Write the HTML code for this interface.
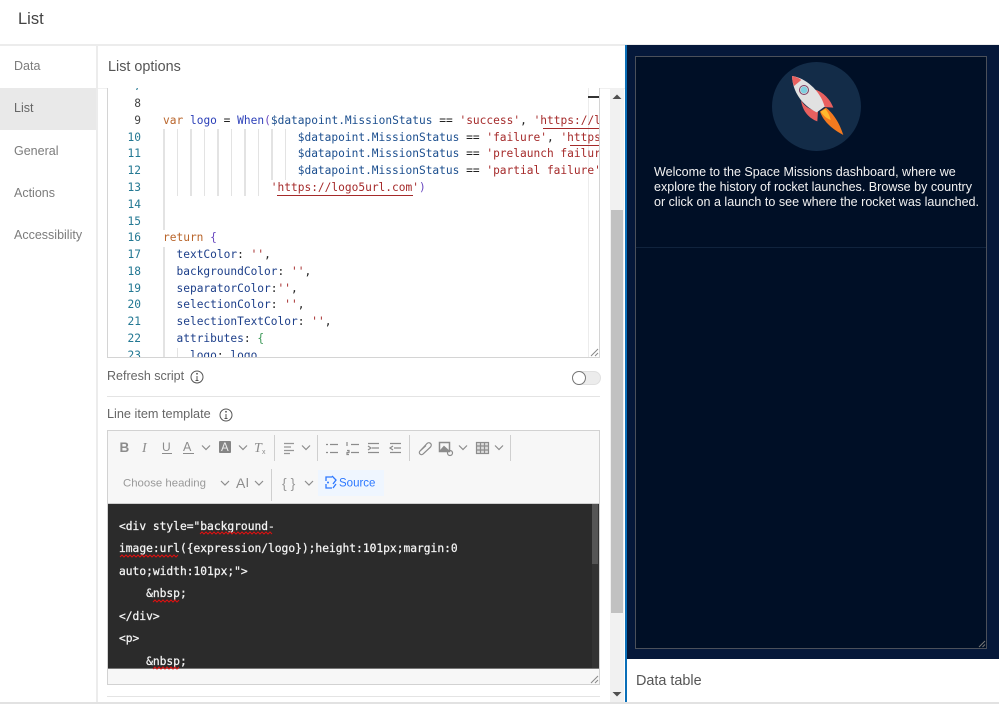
<!DOCTYPE html>
<html><head><meta charset="utf-8"><style>
html,body{margin:0;padding:0;background:#fff;width:999px;height:714px;overflow:hidden}
body{position:relative;font-family:"Liberation Sans",sans-serif}
.a{position:absolute}
.t{position:absolute;white-space:nowrap;line-height:18px}
.nav{color:#7c7c7c;font-size:12.5px;left:14px}
pre{margin:0;font-family:"DejaVu Sans Mono",monospace;font-size:11.2px;position:absolute}
.g{position:absolute;width:1.5px;background:#e3e3e3}
.k{color:#b9652b}.v{color:#2b3fb8}.d{color:#1c4f8f}.s{color:#a52a2a}.p{color:#222}.x{color:#1d3f8a}.b1{color:#6b4bc0}.b2{color:#3f9a5a}
</style></head><body>
<div class="t" style="left:18px;top:10px;font-size:16.5px;color:#444">List</div>
<div class="a" style="left:0;top:44px;width:999px;height:2px;background:#ececec"></div>
<div class="a" style="left:96px;top:46px;width:2px;height:656px;background:#ececec"></div>
<div class="a" style="left:0;top:88px;width:96px;height:42px;background:#e9e9e9"></div>
<div class="t nav" style="top:57px">Data</div>
<div class="t nav" style="top:99px;color:#666">List</div>
<div class="t nav" style="top:142px">General</div>
<div class="t nav" style="top:184px">Actions</div>
<div class="t nav" style="top:226px">Accessibility</div>
<div class="t" style="left:108px;top:58px;font-size:14.4px;color:#555">List options</div>
<div class="a" style="left:98px;top:88px;width:527px;height:1px;background:#f0f0f0"></div>

<div class="a" style="left:610px;top:89px;width:14px;height:613px;background:#f1f1f1"></div>
<div class="a" style="left:611px;top:210px;width:12px;height:403px;background:#c1c1c1"></div>
<div class="a" style="left:107px;top:88px;width:493px;height:270px;border:solid #d4d4d4;border-width:0 1px 1px 1px;box-sizing:border-box;overflow:hidden;background:#fff">
<div class="a" style="left:480px;top:0;width:1px;height:270px;background:#ececec"></div>
<pre style="left:0;top:-8.64px;width:33px;text-align:right;line-height:16.77px;color:#237893">7
<span style="color:#444">8
9</span>
10
11
12
13
14
15
16
17
18
19
20
21
22
23</pre>
<div class="g" style="left:55px;top:41px;height:101px"></div>
<div class="g" style="left:55px;top:159px;height:110px"></div>
<div class="g" style="left:68.5px;top:41px;height:67px"></div>
<div class="g" style="left:82px;top:41px;height:67px"></div>
<div class="g" style="left:95.5px;top:41px;height:67px"></div>
<div class="g" style="left:109px;top:41px;height:67px"></div>
<div class="g" style="left:122.5px;top:41px;height:67px"></div>
<div class="g" style="left:136px;top:41px;height:67px"></div>
<div class="g" style="left:149.5px;top:41px;height:67px"></div>
<div class="g" style="left:163px;top:41px;height:51px"></div>
<div class="g" style="left:176.5px;top:41px;height:51px"></div>
<div class="g" style="left:68.5px;top:260px;height:10px"></div>
<div class="a" style="left:55px;top:0;width:436px;height:270px;overflow:hidden">
<pre style="left:0;top:-8.64px;line-height:16.77px;color:#222">


<span class="k">var</span> <span class="v">logo</span> = <span class="v">When</span><span class="b1">(</span><span class="d">$datapoint.MissionStatus</span> == <span class="s">'success'</span>, <span class="s">'https://logo1url.com'</span>,
                    <span class="d">$datapoint.MissionStatus</span> == <span class="s">'failure'</span>, <span class="s">'https://logo2url.com'</span>,
                    <span class="d">$datapoint.MissionStatus</span> == <span class="s">'prelaunch failure'</span>, <span class="s">'https'</span>,
                    <span class="d">$datapoint.MissionStatus</span> == <span class="s">'partial failure'</span>, <span class="s">'https'</span>,
                <span class="s">'https://logo5url.com'</span><span class="b1">)</span>


<span class="k">return</span> <span class="b1">{</span>
  <span class="x">textColor</span>: <span class="s">''</span>,
  <span class="x">backgroundColor</span>: <span class="s">''</span>,
  <span class="x">separatorColor</span>:<span class="s">''</span>,
  <span class="x">selectionColor</span>: <span class="s">''</span>,
  <span class="x">selectionTextColor</span>: <span class="s">''</span>,
  <span class="x">attributes</span>: <span class="b2">{</span>
    <span class="x">logo</span>: <span class="x">logo</span></pre>
</div>
<div class="a" style="left:480px;top:8px;width:11px;height:2px;background:#333"></div>
<div class="a" style="left:435px;top:40px;width:56px;height:1px;background:#a52a2a"></div>
<div class="a" style="left:462px;top:57px;width:29px;height:1px;background:#a52a2a"></div>
<div class="a" style="left:169px;top:107px;width:136px;height:1px;background:#a52a2a"></div>
</div>

<div class="t" style="left:107px;top:367px;font-size:12.5px;color:#666">Refresh script</div>
<div class="a" style="left:107px;top:396px;width:493px;height:1px;background:#e4e4e4"></div>
<div class="t" style="left:107px;top:405px;font-size:12.7px;color:#666">Line item template</div>
<div class="a" style="left:572px;top:371px;width:29px;height:14px;border-radius:7px;background:#ececec;box-sizing:border-box;border:1px solid #e0e0e0"></div>
<div class="a" style="left:572px;top:371px;width:14px;height:14px;border-radius:50%;background:#fff;box-sizing:border-box;border:1.5px solid #777"></div>

<div class="a" style="left:107px;top:430px;width:493px;height:255px;background:#f7f7f7;border:1px solid #d2d2d2;box-sizing:border-box"></div>
<div class="a" style="left:318px;top:470px;width:66px;height:26px;background:#eff6ff"></div>
<div class="a" style="left:108px;top:503px;width:491px;height:1px;background:#cfcfcf"></div>
<div class="a" style="left:108px;top:504px;width:491px;height:165px;background:#2b2b2b;overflow:hidden;border-bottom:1px solid #777;box-sizing:border-box">
<div class="a" style="left:484px;top:0;width:7px;height:165px;background:#333"></div>
<div class="a" style="left:484px;top:0;width:6px;height:60px;background:#555"></div>
<pre style="left:11px;top:11.500px;line-height:22.6px;color:#f4f4f4;font-size:11.25px;-webkit-text-stroke:.25px #f4f4f4">&lt;div style="background-
image:url({expression/logo});height:101px;margin:0
auto;width:101px;"&gt;
    &amp;nbsp;
&lt;/div&gt;
&lt;p&gt;
    &amp;nbsp;</pre>
</div>
<div class="a" style="left:107px;top:696px;width:493px;height:1px;background:#e4e4e4"></div>

<div class="a" style="left:625px;top:45px;width:374px;height:614px;background:#05183a"></div>
<div class="a" style="left:625px;top:45px;width:2px;height:658px;background:#0a6fb8"></div>
<div class="a" style="left:635px;top:56px;width:352px;height:593px;background:#000f26;border:1px solid #4b505a;box-sizing:border-box"></div>
<div class="a" style="left:636px;top:247px;width:350px;height:1px;background:#10233d"></div>
<div class="a" style="left:772px;top:62px;width:89px;height:89px;border-radius:50%;background:#132c48"></div>
<div class="t" style="left:654px;top:164.500px;font-size:12.55px;line-height:15.3px;color:#f2f2f2">Welcome to the Space Missions dashboard, where we<br>explore the history of rocket launches. Browse by country<br>or click on a launch to see where the rocket was launched.</div>
<div class="t" style="left:636px;top:672px;font-size:14.4px;color:#555">Data table</div>
<div class="a" style="left:0;top:702px;width:999px;height:2px;background:#e2e2e2"></div>

<svg class="a" style="left:0;top:0" width="999" height="714" viewBox="0 0 999 714" fill="none">
<!-- rocket -->
<g transform="translate(760 55) scale(.3333)">
<path d="M163 103C190 110 212 135 220 158L190 156C186 135 175 118 163 103Z" fill="#e8605f"/>
<path d="M123 136C135 155 150 165 174 168L172 199C148 190 128 170 123 136Z" fill="#e8605f"/>
<path d="M96 63C135 68 180 105 194 155L170 172C125 150 98 110 96 63Z" fill="#e1e1e1"/>
<path d="M96 63C108 65 118 70 124 75L102 93C99 85 96 75 96 63Z" fill="#e8605f"/>
<circle cx="132" cy="105" r="15" fill="#7d3f63"/><circle cx="132" cy="105" r="12" fill="#d8d8d8"/><circle cx="132" cy="105" r="10" fill="#7fd0e0"/>
<path d="M180 170L198 158C225 180 240 210 250 240C220 225 190 200 180 170Z" fill="#f47a1f"/>
<path d="M182 170L196 162C205 172 210 185 212 195C198 190 188 180 182 170Z" fill="#fdb92e"/>
</g>
<!-- scroll arrows -->
<path d="M612.500 99L617 94.500L621.500 99Z" fill="#505050"/><path d="M612.500 692L617 696.500L621.500 692Z" fill="#505050"/>
<!-- info icons -->
<g stroke="#555" stroke-width="1"><circle cx="197" cy="377" r="6"/><circle cx="226" cy="415" r="6"/><path d="M197 376V380.500M195.500 380.500H198.500M226 414V418.500M224.500 418.500H227.500"/></g>
<circle cx="197" cy="373.800" r=".9" fill="#555"/><circle cx="226" cy="411.800" r=".9" fill="#555"/>
<!-- resize -->
<path d="M591 356L598 349M595 356L598 353" stroke="#888"/><path d="M591 683L598 676M595 683L598 680" stroke="#888"/><path d="M979 647L985 641M982.500 647L985 644.500" stroke="#777"/>
<!-- squiggles -->
<g stroke="#d11" stroke-width="1"><path d="M200 534l2-2 2 2 2-2 2 2 2-2 2 2 2-2 2 2 2-2 2 2 2-2 2 2 2-2 2 2 2-2 2 2 2-2 2 2 2-2 2 2 2-2 2 2 2-2 2 2 2-2 2 2 2-2 2 2 2-2 2 2 2-2 2 2 2-2 2 2 2-2 2 2"/><path d="M120 557l2-2 2 2 2-2 2 2 2-2 2 2 2-2 2 2 2-2 2 2 2-2 2 2 2-2 2 2 2-2 2 2 2-2 2 2 2-2 2 2 2-2 2 2 2-2 2 2 2-2 2 2 2-2 2 2 2-2"/><path d="M153 602l2-2 2 2 2-2 2 2 2-2 2 2 2-2 2 2 2-2 2 2 2-2 2 2 2-2"/><path d="M153 669l2-2 2 2 2-2 2 2 2-2 2 2 2-2 2 2 2-2 2 2 2-2 2 2 2-2" /></g>
<!-- toolbar -->
<g font-family="Liberation Sans,sans-serif" fill="#8c8c8c">
<text x="119.500" y="452" font-size="13.500" font-weight="bold">B</text>
<text x="142" y="452" font-size="14" font-style="italic" font-family="Liberation Serif,serif">I</text>
<text x="162" y="451" font-size="12">U</text><path d="M162 453.500H172" stroke="#8c8c8c"/>
<text x="183" y="451" font-size="12.500">A</text><path d="M183 453.500H194" stroke="#8c8c8c"/>
<rect x="219" y="441" width="12" height="12" rx="1" fill="#858585"/><text x="221" y="451" font-size="11.500" fill="#eee">A</text>
<text x="254" y="452" font-size="14" font-style="italic" font-family="Liberation Serif,serif">T</text><text x="262" y="454" font-size="7">x</text>
<text x="123" y="486.500" font-size="11.400" fill="#999">Choose heading</text>
<text x="236" y="488" font-size="14">A</text><text x="245.500" y="487" font-size="13">I</text>
<text x="282" y="488" font-size="14" fill="#999">{ }</text>
<text x="339" y="486.500" font-size="11.500" fill="#2c78ff">Source</text>
</g>
<g stroke="#8c8c8c" stroke-width="1.200">
<path d="M202 445.500l4 4 4-4M239 445.500l4 4 4-4M302 445.500l4 4 4-4M459 445.500l4 4 4-4M495 445.500l4 4 4-4M221 481l4 4 4-4M255 481l4 4 4-4M305 481l4 4 4-4"/>
<path d="M284 443.500H294M284 447H291M284 450.500H294M284 453.500H290" opacity=".9"/>
<path d="M330 444.500H338M330 452.500H338M326 444.500H328M326 452.500H328"/>
<path d="M351 444.500H359M351 452.500H359M347 442V446M347 450.500H349V452.500H347V454.500H349"/>
<path d="M368 443.500H379M372 448H379M368 452.500H379M368 446L371 448 368 450"/>
<path d="M390 443.500H401M394 448H401M390 452.500H401M393 446L390 448 393 450"/>
<path d="M420 451L427 443.500C430 441 433 445 430 447.500L423 454C421 456 418 453 420 451L426 445.500"/>
<rect x="439.500" y="442.500" width="10" height="9" stroke-width="1.500"/><path d="M440 451L444 446.500 449 451" fill="#8c8c8c"/><circle cx="450" cy="453" r="2.500"/>
<rect x="476.500" y="442.500" width="12" height="11" fill="#ddd"/><path d="M476.500 446H488.500M476.500 450H488.500M480.500 442.500V453.500M484.500 442.500V453.500"/>
<path d="M332 477H326V481M326 484V488H332M332 476L336 480 333 484M336 484L333 488" stroke="#2c78ff" stroke-width="1.300"/>
</g>
<g fill="#cfcfcf"><rect x="274" y="435" width="1" height="26"/><rect x="317" y="435" width="1" height="26"/><rect x="409" y="435" width="1" height="26"/><rect x="510" y="435" width="1" height="26"/><rect x="271" y="469" width="1" height="32"/></g>
<circle cx="328" cy="482.500" r="1" fill="#2c78ff"/>
</svg>
</body></html>
